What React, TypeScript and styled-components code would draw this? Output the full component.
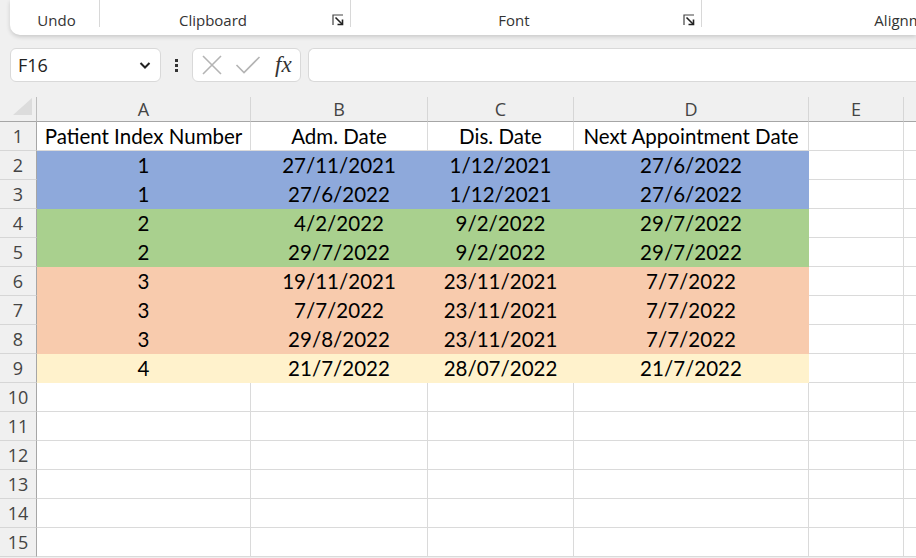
import React from "react";
import styled, { createGlobalStyle } from "styled-components";

const GlobalStyle = createGlobalStyle`
  html, body {
    margin: 0;
    padding: 0;
    background: #f0f0f0;
    overflow: hidden;
  }
  body {
    width: 916px;
    height: 558px;
    font-family: "Open Sans", "Liberation Sans", sans-serif;
  }
`;

const BLUE = "#8ea9db";
const GREEN = "#a9d08e";
const ORANGE = "#f8cbad";
const YELLOW = "#fff2cc";

type Row = { cells: (string | number)[]; fill?: string };

const rows: Row[] = [
  { cells: ["Patient Index Number", "Adm. Date", "Dis. Date", "Next Appointment Date"] },
  { cells: [1, "27/11/2021", "1/12/2021", "27/6/2022"], fill: BLUE },
  { cells: [1, "27/6/2022", "1/12/2021", "27/6/2022"], fill: BLUE },
  { cells: [2, "4/2/2022", "9/2/2022", "29/7/2022"], fill: GREEN },
  { cells: [2, "29/7/2022", "9/2/2022", "29/7/2022"], fill: GREEN },
  { cells: [3, "19/11/2021", "23/11/2021", "7/7/2022"], fill: ORANGE },
  { cells: [3, "7/7/2022", "23/11/2021", "7/7/2022"], fill: ORANGE },
  { cells: [3, "29/8/2022", "23/11/2021", "7/7/2022"], fill: ORANGE },
  { cells: [4, "21/7/2022", "28/07/2022", "21/7/2022"], fill: YELLOW },
  { cells: [] },
  { cells: [] },
  { cells: [] },
  { cells: [] },
  { cells: [] },
  { cells: [] },
];

const columns = ["A", "B", "C", "D", "E", ""];

const LauncherIcon = () => (
  <svg width="12" height="12" viewBox="0 0 12 12">
    <path d="M1 11V1h10" fill="none" stroke="#444" strokeWidth="1.2" />
    <path d="M3.5 3.5L10 10" stroke="#222" strokeWidth="1.6" />
    <path d="M5.5 10.5H10.5V5.5" fill="none" stroke="#222" strokeWidth="1.6" />
  </svg>
);

const App: React.FC = () => {
  return (
    <>
      <GlobalStyle />
      <Page>
        <RibbonWrap>
          <Ribbon>
            <Group width={90} shift={4}>
              <GroupLabel>Undo</GroupLabel>
            </Group>
            <Group width={251} shift={-24}>
              <GroupLabel>Clipboard</GroupLabel>
              <Launcher>
                <LauncherIcon />
              </Launcher>
            </Group>
            <Group width={351} shift={-24}>
              <GroupLabel>Font</GroupLabel>
              <Launcher>
                <LauncherIcon />
              </Launcher>
            </Group>
            <Group width={440} shift={-24} last>
              <GroupLabel>Alignment</GroupLabel>
            </Group>
          </Ribbon>
        </RibbonWrap>

        <FormulaBar>
          <NameBox>
            <NameText>F16</NameText>
            <svg width="14" height="10" viewBox="0 0 14 10">
              <path d="M2.5 3l4.5 4.5L11.5 3" fill="none" stroke="#222" strokeWidth="2" />
            </svg>
          </NameBox>
          <Kebab>
            <span />
            <span />
            <span />
          </Kebab>
          <FxBox>
            <svg width="22" height="22" viewBox="0 0 22 22">
              <path d="M2 2l18 18M20 2L2 20" stroke="#b4b4b4" strokeWidth="1.6" />
            </svg>
            <svg width="26" height="22" viewBox="0 0 26 22">
              <path d="M1.5 11l7.5 7.5L24.5 3" fill="none" stroke="#b4b4b4" strokeWidth="1.6" />
            </svg>
            <FxText>fx</FxText>
          </FxBox>
          <FormulaInput />
        </FormulaBar>

        <Sheet>
          <Corner>
            <svg width="22" height="18" viewBox="0 0 22 18">
              <path d="M21 0V17H2z" fill="#dcdcdc" />
            </svg>
          </Corner>
          {columns.map((c, i) => (
            <ColHeader key={"h" + i}>{c}</ColHeader>
          ))}
          {rows.map((row, r) => (
            <React.Fragment key={r}>
              <RowHeader>{r + 1}</RowHeader>
              {[0, 1, 2, 3, 4, 5].map((ci) => {
                const filled = row.fill && ci < 4;
                return (
                  <Cell key={ci} fill={filled ? row.fill : undefined}>
                    {row.cells[ci] ?? ""}
                  </Cell>
                );
              })}
            </React.Fragment>
          ))}
        </Sheet>
      </Page>
    </>
  );
};

export default App;

const Page = styled.div`
  width: 916px;
  height: 558px;
  overflow: hidden;
  background: #f0f0f0;
`;

const RibbonWrap = styled.div`
  padding-left: 10px;
`;

const Ribbon = styled.div`
  display: flex;
  height: 35px;
  background: #ffffff;
  border-bottom-left-radius: 10px;
  box-shadow: 0 2px 4px rgba(0, 0, 0, 0.16);
  overflow: hidden;
`;

const Group = styled.div<{ width: number; shift: number; last?: boolean }>`
  position: relative;
  box-sizing: border-box;
  flex: 0 0 ${(p) => p.width}px;
  height: 27px;
  display: flex;
  align-items: flex-end;
  justify-content: center;
  padding-left: ${(p) => (p.shift > 0 ? p.shift : 0)}px;
  padding-right: ${(p) => (p.shift < 0 ? -p.shift : 0)}px;
  border-right: ${(p) => (p.last ? "none" : "1px solid #d8d8d8")};
`;

const GroupLabel = styled.span`
  font-size: 15px;
  line-height: 18px;
  color: #333;
  margin-bottom: -2px;
`;

const Launcher = styled.span`
  position: absolute;
  right: 6px;
  bottom: 1px;
  display: flex;
`;

const FormulaBar = styled.div`
  display: flex;
  align-items: center;
  height: 34px;
  margin-top: 13px;
  padding-left: 10px;
`;

const NameBox = styled.div`
  box-sizing: border-box;
  width: 151px;
  height: 34px;
  display: flex;
  align-items: center;
  justify-content: space-between;
  padding: 0 8px 0 7px;
  background: #fff;
  border: 1px solid #d9d9d9;
  border-radius: 6px;
`;

const NameText = styled.span`
  font-size: 18px;
  color: #222;
`;

const Kebab = styled.div`
  width: 31px;
  display: flex;
  flex-direction: column;
  align-items: center;
  gap: 2px;
  span {
    width: 3px;
    height: 3px;
    background: #333;
  }
`;

const FxBox = styled.div`
  box-sizing: border-box;
  width: 109px;
  height: 34px;
  display: flex;
  align-items: center;
  gap: 12px;
  padding-left: 8px;
  background: #fff;
  border: 1px solid #d9d9d9;
  border-radius: 6px;
`;

const FxText = styled.span`
  font-family: "Liberation Serif", "DejaVu Serif", serif;
  font-style: italic;
  font-size: 23px;
  color: #333;
  margin-left: 2px;
`;

const FormulaInput = styled.div`
  box-sizing: border-box;
  flex: 1;
  height: 34px;
  margin-left: 7px;
  background: #fff;
  border: 1px solid #d9d9d9;
  border-right: none;
  border-radius: 6px 0 0 6px;
`;

const Sheet = styled.div`
  display: grid;
  grid-template-columns: 37px 214px 177px 146px 235px 95px 20px;
  grid-template-rows: 25px;
  grid-auto-rows: 29px;
  margin-top: 15px;
  background: #fff;
`;

const Corner = styled.div`
  box-sizing: border-box;
  background: #f0f0f0;
  border-right: 1px solid #bdbdbd;
  border-bottom: 1px solid #a6a6a6;
  display: flex;
  justify-content: flex-end;
  align-items: flex-start;
  padding: 1px 3px 0 0;
`;

const ColHeader = styled.div`
  box-sizing: border-box;
  background: #f0f0f0;
  border-right: 1px solid #d6d6d6;
  border-bottom: 1px solid #a6a6a6;
  display: flex;
  align-items: center;
  justify-content: center;
  font-size: 18px;
  color: #444;
`;

const RowHeader = styled.div`
  box-sizing: border-box;
  background: #f0f0f0;
  border-right: 1px solid #a6a6a6;
  border-bottom: 1px solid #d6d6d6;
  display: flex;
  align-items: center;
  justify-content: center;
  font-size: 18px;
  color: #444;
`;

const Cell = styled.div<{ fill?: string }>`
  box-sizing: border-box;
  background: ${(p) => p.fill ?? "#fff"};
  border-right: 1px solid ${(p) => (p.fill ? "transparent" : "#dadada")};
  border-bottom: 1px solid ${(p) => (p.fill ? "transparent" : "#dadada")};
  display: flex;
  align-items: center;
  justify-content: center;
  white-space: nowrap;
  overflow: hidden;
  font-family: "Lato", "Liberation Sans", sans-serif;
  font-size: 20.5px;
  color: #000;
`;
